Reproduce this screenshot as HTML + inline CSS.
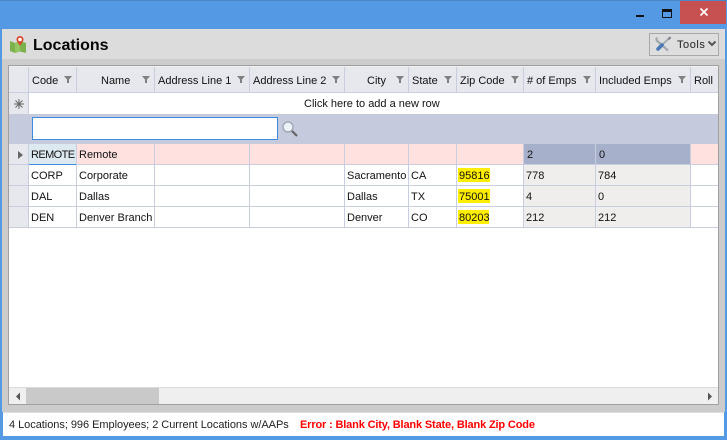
<!DOCTYPE html>
<html><head><meta charset="utf-8"><style>
html,body{margin:0;padding:0;width:727px;height:440px;overflow:hidden;background:#5499e3}
body{position:relative;font-family:"Liberation Sans",sans-serif;font-size:11px;color:#111}
div,span.a,svg{position:absolute}
.t{white-space:nowrap;line-height:14px;height:14px}
.h{top:67px;height:25px;background:#e6e8ee;border-right:1px solid #c9cde0}
.hb{top:92px;height:1px;background:#c9cde0}
</style></head><body>
<div style="left:680px;top:1px;width:46px;height:23px;background:#c75050"></div>
<svg style="left:697px;top:5px" width="14" height="14" viewBox="0 0 14 14"><path d="M3.500 3.500L10.500 10.500M10.500 3.500L3.500 10.500" stroke="#fff" stroke-width="1.600"/></svg>
<div style="left:636px;top:15px;width:8px;height:2px;background:#111"></div>
<div style="left:662px;top:9px;width:8px;height:5px;border:1px solid #111;border-top:3px solid #111"></div>
<div style="left:0;top:0;width:727px;height:1px;background:#4a86c8"></div>

<div style="left:2px;top:29px;width:723px;height:30px;background:#dcdcdc"></div>
<div style="left:2px;top:59px;width:723px;height:353px;background:#cccccc"></div>

<svg style="left:9px;top:35px" width="18" height="19" viewBox="0 0 18 19"><path d="M1 6L6 8L11 6L17 8V18L11 16.500L6 18L1 16Z" fill="#7cb24c"/><path d="M6 8L11 6V16.500L6 18Z" fill="#93c562"/><path d="M11 1C8.500 1 7.500 3 7.500 4.500C7.500 6.500 10 9 11 11C12 9 14.500 6.500 14.500 4.500C14.500 3 13.500 1 11 1Z" fill="#d9482e"/><circle cx="11" cy="4.500" r="1.800" fill="#fff"/></svg>
<div class="t" style="left:33px;top:36px;font-size:16px;font-weight:bold;line-height:20px;height:20px;color:#050505">Locations</div>

<div style="left:649px;top:33px;width:68px;height:21px;border:1px solid #a8a8a8;background:#dedede"></div>
<svg style="left:654px;top:36px" width="19" height="17" viewBox="0 0 19 17"><path d="M3 1.500C2 3 2.500 5 4 5.500L14 14.500" stroke="#a4a8ae" stroke-width="2.200" fill="none"/><path d="M16 1.500L9 8" stroke="#a8adb4" stroke-width="2"/><path d="M8 9L4 13" stroke="#4a78b5" stroke-width="3.600" stroke-linecap="round"/><path d="M16.500 1L14.500 3.500" stroke="#7d8289" stroke-width="2"/></svg>
<div class="t" style="left:677px;top:38px;color:#222;letter-spacing:.55px">Tools</div>
<svg style="left:707px;top:40px" width="10" height="8" viewBox="0 0 10 8"><path d="M1.500 1.500L5 5L8.500 1.500" stroke="#555" stroke-width="2" fill="none"/></svg>

<!-- grid -->
<div style="left:8px;top:65px;width:709px;height:338px;border:1px solid #a0a0a0;background:#fff"></div>
<div style="left:9px;top:66px;width:709px;height:1px;background:#f0f0f0"></div>

<!-- header -->
<div class="h" style="left:9px;width:19px"></div>
<div class="h" style="left:29px;width:47px"></div>
<div class="h" style="left:77px;width:77px"></div>
<div class="h" style="left:155px;width:94px"></div>
<div class="h" style="left:250px;width:94px"></div>
<div class="h" style="left:345px;width:63px"></div>
<div class="h" style="left:409px;width:47px"></div>
<div class="h" style="left:457px;width:66px"></div>
<div class="h" style="left:524px;width:71px"></div>
<div class="h" style="left:596px;width:94px"></div>
<div class="h" style="left:691px;width:27px;border-right:0"></div>
<div class="hb" style="left:9px;width:709px"></div>

<div class="t" style="left:32px;top:74px">Code</div>
<div class="t" style="left:101px;top:74px">Name</div>
<div class="t" style="left:158px;top:74px">Address Line 1</div>
<div class="t" style="left:253px;top:74px">Address Line 2</div>
<div class="t" style="left:367px;top:74px">City</div>
<div class="t" style="left:412px;top:74px">State</div>
<div class="t" style="left:460px;top:74px">Zip Code</div>
<div class="t" style="left:527px;top:74px"># of Emps</div>
<div class="t" style="left:599px;top:74px">Included Emps</div>
<div class="t" style="left:694px;top:74px">Roll</div>

<svg style="left:0;top:0" width="727" height="100" viewBox="0 0 727 100"><g fill="#808080"><path d="M64 76h8l-3 3.500v3.500h-2v-3.500z"/><path d="M142 76h8l-3 3.500v3.500h-2v-3.500z"/><path d="M237 76h8l-3 3.500v3.500h-2v-3.500z"/><path d="M332 76h8l-3 3.500v3.500h-2v-3.500z"/><path d="M396 76h8l-3 3.500v3.500h-2v-3.500z"/><path d="M444 76h8l-3 3.500v3.500h-2v-3.500z"/><path d="M511 76h8l-3 3.500v3.500h-2v-3.500z"/><path d="M583 76h8l-3 3.500v3.500h-2v-3.500z"/><path d="M678 76h8l-3 3.500v3.500h-2v-3.500z"/></g></svg>

<!-- new row -->
<div style="left:9px;top:93px;width:19px;height:21px;background:#e6e8ee"></div>
<div style="left:28px;top:93px;width:1px;height:21px;background:#c9cde0"></div>
<svg style="left:13px;top:98px" width="12" height="12" viewBox="0 0 12 12"><path d="M6 1V11M1 6H11M2.500 2.500L9.500 9.500M9.500 2.500L2.500 9.500" stroke="#666" stroke-width="1"/></svg>
<div class="t" style="left:304px;top:97px">Click here to add a new row</div>

<!-- filter band -->
<div style="left:9px;top:114px;width:709px;height:30px;background:#c5cbdc"></div>
<div style="left:32px;top:117px;width:244px;height:21px;background:#fff;border:1px solid #3c8be0"></div>
<svg style="left:281px;top:120px" width="18" height="18" viewBox="0 0 18 18"><circle cx="7" cy="7" r="5" fill="#eef3f8" stroke="#a0a9b6" stroke-width="1.500"/><path d="M11 11L16 16" stroke="#666" stroke-width="2.200"/></svg>

<!-- rows -->
<div style="left:9px;top:144px;width:19px;height:84px;background:#e6e8ee"></div>
<svg style="left:17px;top:150px" width="7" height="10" viewBox="0 0 7 10"><path d="M1 1L6 5L1 9Z" fill="#666"/></svg>
<div style="left:29px;top:144px;width:689px;height:20px;background:#ffe1e0"></div>
<div style="left:29px;top:144px;width:47px;height:20px;background:#dce9f1;border-bottom:1px solid #3c8be0"></div>
<div style="left:524px;top:144px;width:166px;height:20px;background:#a7b0ca"></div>
<div style="left:524px;top:165px;width:166px;height:62px;background:#f0eeec"></div>

<!-- row lines -->
<div style="left:9px;top:164px;width:20px;height:1px;background:#c9cde0"></div>
<div style="left:76px;top:164px;width:642px;height:1px;background:#c9cde0"></div>
<div style="left:9px;top:185px;width:709px;height:1px;background:#c9cde0"></div>
<div style="left:9px;top:206px;width:709px;height:1px;background:#c9cde0"></div>
<div style="left:9px;top:227px;width:709px;height:1px;background:#c9cde0"></div>
<!-- col lines -->
<div style="left:28px;top:144px;width:1px;height:84px;background:#c9cde0"></div>
<div style="left:76px;top:144px;width:1px;height:84px;background:#c9cde0"></div>
<div style="left:154px;top:144px;width:1px;height:84px;background:#c9cde0"></div>
<div style="left:249px;top:144px;width:1px;height:84px;background:#c9cde0"></div>
<div style="left:344px;top:144px;width:1px;height:84px;background:#c9cde0"></div>
<div style="left:408px;top:144px;width:1px;height:84px;background:#c9cde0"></div>
<div style="left:456px;top:144px;width:1px;height:84px;background:#c9cde0"></div>
<div style="left:523px;top:144px;width:1px;height:84px;background:#c9cde0"></div>
<div style="left:595px;top:144px;width:1px;height:84px;background:#c9cde0"></div>
<div style="left:690px;top:144px;width:1px;height:84px;background:#c9cde0"></div>

<!-- yellow -->
<div style="left:458px;top:168px;width:32px;height:14px;background:#ffee00"></div>
<div style="left:458px;top:189px;width:32px;height:14px;background:#ffee00"></div>
<div style="left:458px;top:210px;width:31px;height:14px;background:#ffee00"></div>

<div class="t" style="left:31px;top:148px;letter-spacing:-.6px">REMOTE</div><div class="t" style="left:79px;top:148px">Remote</div><div class="t" style="left:527px;top:148px">2</div><div class="t" style="left:599px;top:148px">0</div>
<div class="t" style="left:31px;top:169px">CORP</div><div class="t" style="left:79px;top:169px">Corporate</div><div class="t" style="left:347px;top:169px">Sacramento</div><div class="t" style="left:411px;top:169px">CA</div><div class="t" style="left:459px;top:169px">95816</div><div class="t" style="left:526px;top:169px">778</div><div class="t" style="left:598px;top:169px">784</div>
<div class="t" style="left:31px;top:190px">DAL</div><div class="t" style="left:79px;top:190px">Dallas</div><div class="t" style="left:347px;top:190px">Dallas</div><div class="t" style="left:411px;top:190px">TX</div><div class="t" style="left:459px;top:190px">75001</div><div class="t" style="left:526px;top:190px">4</div><div class="t" style="left:598px;top:190px">0</div>
<div class="t" style="left:31px;top:211px">DEN</div><div class="t" style="left:79px;top:211px">Denver Branch</div><div class="t" style="left:347px;top:211px">Denver</div><div class="t" style="left:411px;top:211px">CO</div><div class="t" style="left:459px;top:211px">80203</div><div class="t" style="left:526px;top:211px">212</div><div class="t" style="left:598px;top:211px">212</div>

<!-- scrollbar -->
<div style="left:9px;top:387px;width:709px;height:1px;background:#dcdcdc"></div>
<div style="left:9px;top:388px;width:709px;height:16px;background:#efefef"></div>
<div style="left:26px;top:388px;width:133px;height:16px;background:#c9c9c9"></div>
<svg style="left:15px;top:392px" width="6" height="9" viewBox="0 0 6 9"><path d="M5 0.500V8.500L1 4.500Z" fill="#555"/></svg>
<svg style="left:707px;top:392px" width="6" height="9" viewBox="0 0 6 9"><path d="M1 0.500V8.500L5 4.500Z" fill="#555"/></svg>

<!-- status -->
<div style="left:3px;top:412px;width:721px;height:24px;background:#fff;border-top:1px solid #dedede;box-sizing:border-box"></div>
<div class="t" style="left:9px;top:418px;color:#222;letter-spacing:-.04px">4 Locations; 996 Employees; 2 Current Locations w/AAPs</div>
<div class="t" style="left:300px;top:418px;color:#f00;font-weight:bold;letter-spacing:-.15px">Error : Blank City, Blank State, Blank Zip Code</div>
</body></html>
